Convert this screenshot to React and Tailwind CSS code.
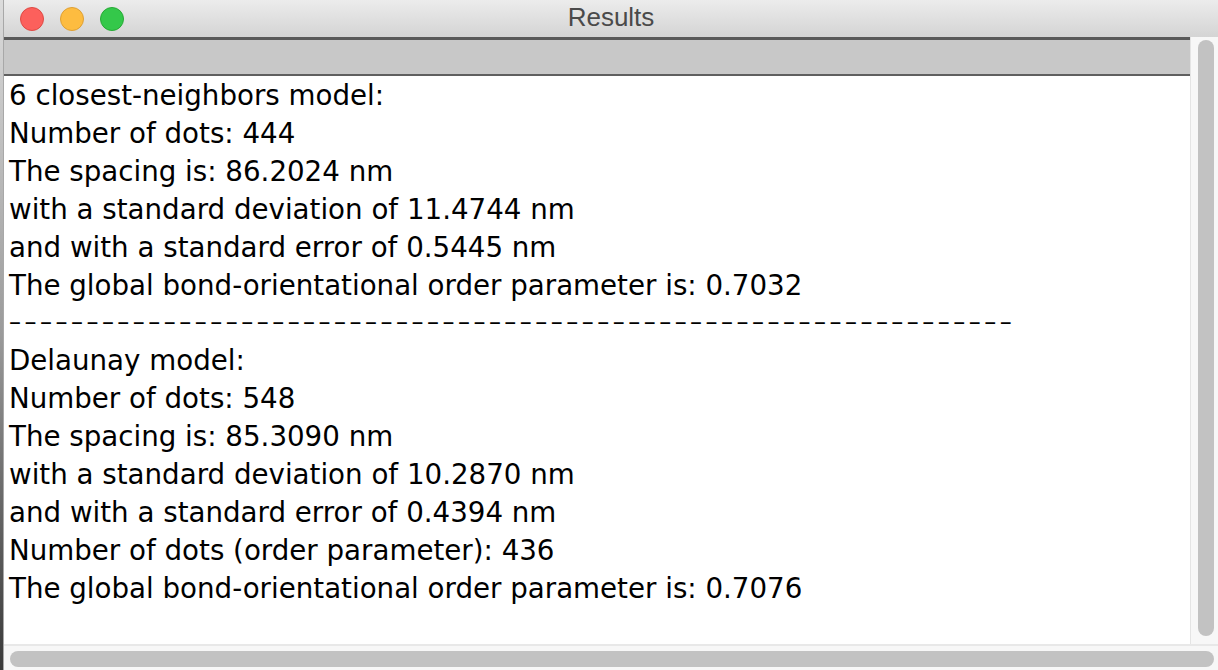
import React from "react";

const lines1 = [
  "6 closest-neighbors model:",
  "Number of dots: 444",
  "The spacing is: 86.2024 nm",
  "with a standard deviation of 11.4744 nm",
  "and with a standard error of 0.5445 nm",
  "The global bond-orientational order parameter is: 0.7032",
];
const lines2 = [
  "Delaunay model:",
  "Number of dots: 548",
  "The spacing is: 85.3090 nm",
  "with a standard deviation of 10.2870 nm",
  "and with a standard error of 0.4394 nm",
  "Number of dots (order parameter): 436",
  "The global bond-orientational order parameter is: 0.7076",
];

export default function App() {
  return (
    <div className="w-[1218px] h-[670px] flex bg-[#3a3a3a] overflow-hidden">
      <div className="w-[3px] h-full bg-gradient-to-b from-[#dcdcdc] via-[#9a9a9a] to-[#3a3a3a]" />
      <div className="flex-1 flex flex-col bg-white border-l border-[#a8a8a8]">
        <div className="h-[37px] bg-gradient-to-b from-[#ececec] to-[#d4d4d4] flex items-center relative">
          <div className="flex items-center gap-[16px] pl-[16px]">
            <span className="w-[24px] h-[24px] rounded-full bg-[#fc605c] border border-[#de4a44]" />
            <span className="w-[24px] h-[24px] rounded-full bg-[#fdbc40] border border-[#dea034]" />
            <span className="w-[24px] h-[24px] rounded-full bg-[#34c84a] border border-[#27aa35]" />
          </div>
          <div className="absolute inset-0 flex items-center justify-center pb-[2px] text-[26px] text-[#4a4a4a] font-['Liberation_Sans',Arial,sans-serif]">
            Results
          </div>
        </div>
        <div className="flex-1 flex min-h-0">
          <div className="flex-1 flex flex-col min-w-0">
            <div className="h-[3px] bg-[#5a5a5a]" />
            <div className="h-[36px] bg-[#c8c8c8] border-b-[2px] border-[#5f5f5f]" />
            <div className="flex-1 pl-[5px] pt-[1px] text-[27.7px] leading-[37.9px] text-black font-['DejaVu_Sans',sans-serif] whitespace-pre">
              {lines1.map((l) => (
                <div key={l}>{l}</div>
              ))}
              <div className="text-[24px] tracking-[3.48px]">{"\u2013".repeat(65)}</div>
              {lines2.map((l) => (
                <div key={l}>{l}</div>
              ))}
            </div>
          </div>
          <div className="w-[28px] bg-[#f7f7f7] border-l border-[#e4e4e4] pl-[7px] pr-[4px] pt-[3px] pb-[8px] flex">
            <div className="flex-1 rounded-full bg-[#c2c2c2]" />
          </div>
        </div>
        <div className="h-[26px] bg-[#f7f7f7] border-t-[2px] border-[#e8e8e8] pl-[6px] pr-[4px] pt-[5px] pb-[3px] flex">
          <div className="flex-1 rounded-full bg-[#c2c2c2]" />
        </div>
      </div>
    </div>
  );
}
